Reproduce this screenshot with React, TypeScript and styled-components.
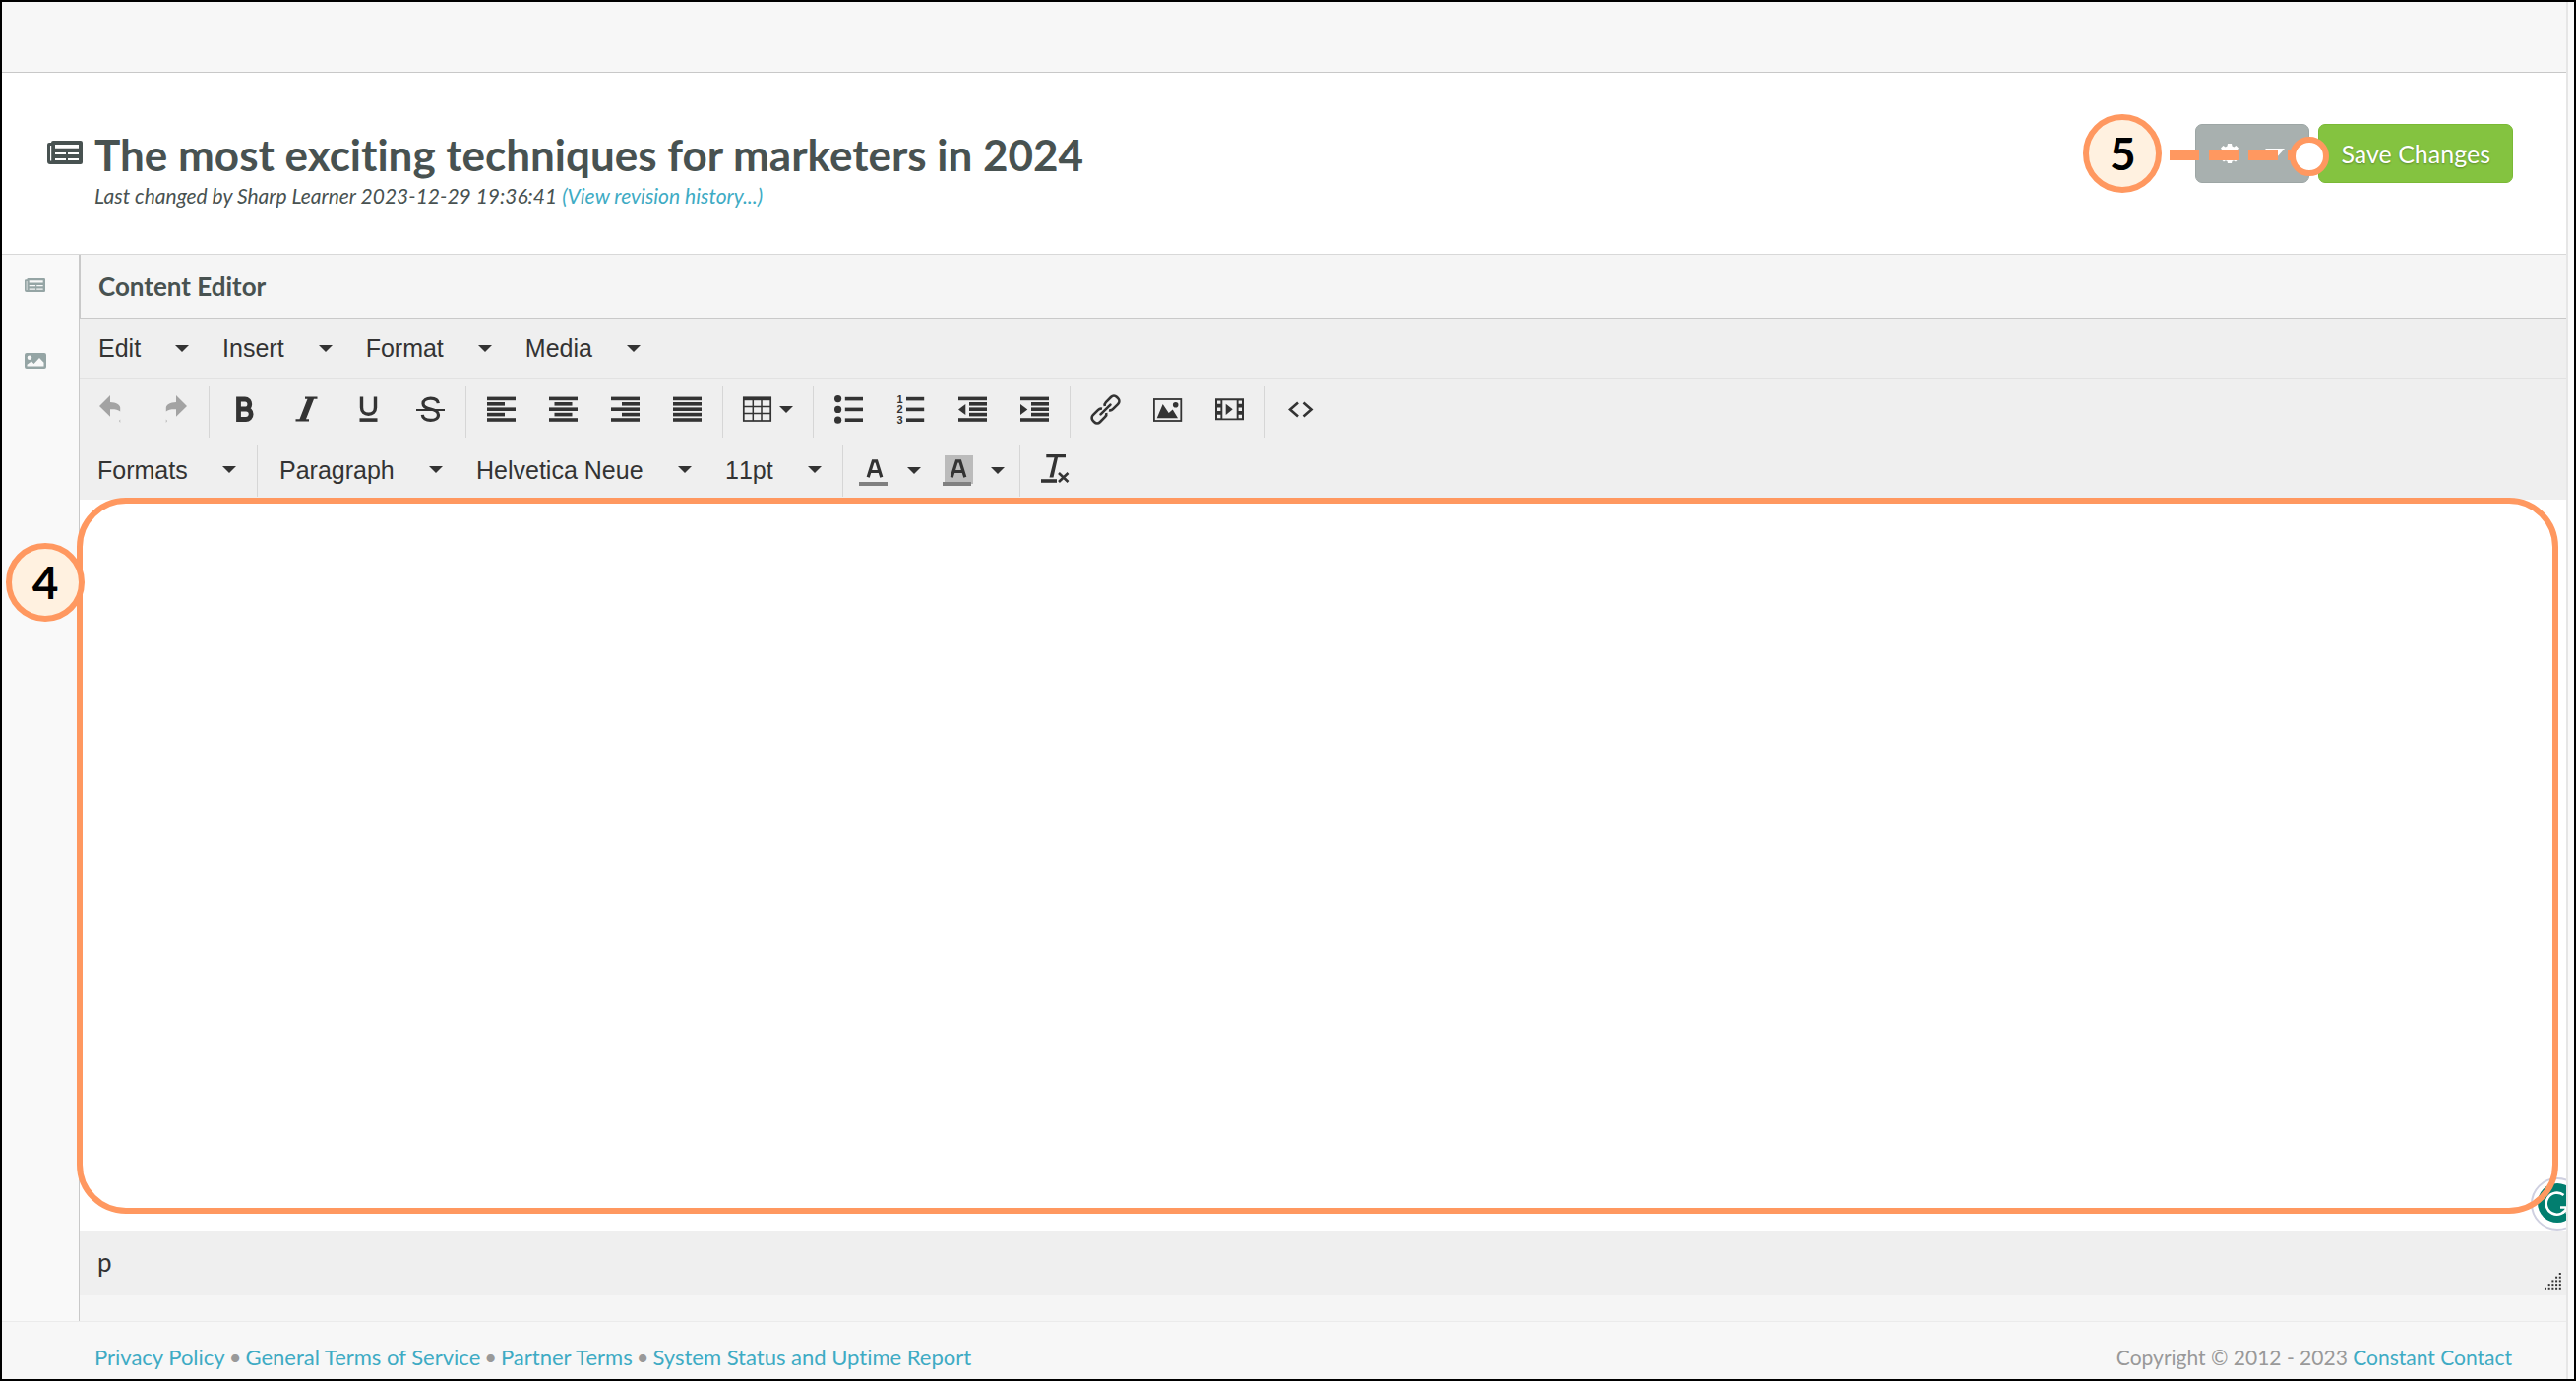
import React from "react";
import styled, { createGlobalStyle, css } from "styled-components";

const ORANGE = "#ff9860";
const INK = "#333333";
const HEADING = "#485251";
const LINK = "#3eabc4";

const GlobalStyle = createGlobalStyle`
  *, *::before, *::after { box-sizing: border-box; }
  body {
    margin: 0;
    background: #000;
    font-family: Lato, "Open Sans", sans-serif;
    font-size: 22px;
    line-height: 28px;
    font-variant-ligatures: none;
    color: ${HEADING};
  }
  h1, h2, p { margin: 0; }
  svg { display: block; flex: none; overflow: visible; }
  button, select, textarea { font: inherit; color: inherit; margin: 0; }
`;

const Page = styled.div`
  display: flex;
  min-height: 100vh;
  border: 2px solid #000;
`;

const Screen = styled.div`
  flex: 1;
  min-width: 0;
  display: flex;
  flex-direction: column;
  background: #f5f5f5;
`;

const ScrollTrack = styled.div`
  width: 8px;
  background: #fafafa;
  border-left: 2px solid #e6e6e6;
`;

const TopBar = styled.div`
  height: 72px;
  background: #f7f7f7;
  border-bottom: 1px solid #c8c8c8;
`;

const Header = styled.header`
  display: flex;
  justify-content: space-between;
  align-items: flex-start;
  padding: 52px 54px 45px 46px;
  background: #fff;
  border-bottom: 1px solid #d8d8d8;
`;

const TitleBlock = styled.div`
  display: flex;
  gap: 12px;
  padding-top: 5px;
`;

const TitleIcon = styled.div`
  padding-top: 12px;
`;

const Title = styled.h1`
  font-size: 44px;
  line-height: 52px;
  font-weight: 700;
`;

const Subtitle = styled.p`
  padding-top: 2px;
  font-size: 21px;
  font-style: italic;
`;

const Link = styled.a`
  color: ${LINK};
  text-decoration: none;
`;

const Actions = styled.div`
  position: relative;
  display: flex;
  gap: 9px;
`;

const ActionButton = styled.button<{ $tone: "grey" | "green" }>`
  display: flex;
  align-items: center;
  justify-content: center;
  height: 60px;
  border-radius: 7px;
  color: #fff;
  font-size: 25px;
  line-height: 32px;
  text-shadow: 0 1px 2px rgba(0, 0, 0, 0.3);
  ${(p) =>
    p.$tone === "green"
      ? css`
          padding: 0 22px;
          background: #84c340;
          border: 1px solid #7ab935;
        `
      : css`
          gap: 26px;
          padding: 0 24px;
          background: #a8b0af;
          border: 1px solid #9da6a5;
        `}
`;

const StepBadge = styled.span<{ $left: number; $top: number }>`
  position: absolute;
  left: ${(p) => p.$left}px;
  top: ${(p) => p.$top}px;
  z-index: 3;
  display: flex;
  align-items: center;
  justify-content: center;
  width: 80px;
  height: 80px;
  border: 6px solid ${ORANGE};
  border-radius: 50%;
  background: #fff1e0;
  color: #000;
  font-size: 46px;
  line-height: 52px;
  font-weight: 700;
`;

const Connector = styled.svg`
  position: absolute;
  left: -26px;
  top: 12px;
`;

const Workspace = styled.div`
  flex: 1;
  display: flex;
`;

const Sidebar = styled.nav`
  display: flex;
  flex-direction: column;
  gap: 62px;
  width: 79px;
  padding: 24px 0 0 23px;
  background: #f9f9f9;
  border-right: 1px solid #c9c9c9;
`;

const SideButton = styled.button`
  display: block;
  align-self: flex-start;
  padding: 0;
  border: 0;
  background: none;
`;

const Panel = styled.main`
  flex: 1;
  min-width: 0;
  display: flex;
  flex-direction: column;
  padding-bottom: 26px;
  color: ${INK};
`;

const PanelTitle = styled.h2`
  padding: 16px 18px;
  border-left: 1px solid #c9c9c9;
  border-bottom: 1px solid #c9c9c9;
  font-size: 26px;
  line-height: 32px;
  font-weight: 700;
  color: ${HEADING};
`;

const controlFont = css`
  font-family: "Liberation Sans", Arial, sans-serif;
  font-size: 25px;
  line-height: 28px;
  font-kerning: none;
`;

const MenuBar = styled.div`
  display: flex;
  height: 61px;
  background: #efefef;
  border-bottom: 1px solid #e2e2e2;
`;

const MenuButton = styled.button`
  ${controlFont}
  display: flex;
  align-items: center;
  gap: 35px;
  padding: 0 15px 0 19px;
  border: 0;
  background: none;
`;

const Toolbar = styled.div`
  display: flex;
  flex-direction: column;
  gap: 7px;
  padding: 7px 0 3px;
  background: #efefef;
`;

const ToolRow = styled.div`
  display: flex;
  height: 53px;
`;

const Group = styled.div`
  display: flex;
  padding: 0 4px;
  & + & {
    border-left: 1px solid #d6d6d6;
  }
  &:first-child {
    padding-left: 1px;
  }
`;

const SelectGroup = styled.div`
  display: flex;
  padding: 0 5px 0 4px;
  & + & {
    border-left: 1px solid #d6d6d6;
  }
  &:first-child {
    padding-left: 0;
  }
`;

const ToolButton = styled.button`
  display: flex;
  align-items: center;
  justify-content: center;
  gap: 8px;
  min-width: 63px;
  padding: 0 16px 4px;
  border: 0;
  background: none;
`;

const ColorButton = styled.button`
  display: flex;
  align-items: center;
  gap: 20px;
  padding: 0 10px 0 12px;
  border: 0;
  background: none;
`;

const Dropdown = styled.label`
  display: grid;
  align-items: center;
  padding: 0 16px 2px 0;
  & > * {
    grid-area: 1 / 1;
  }
  & > svg {
    justify-self: end;
    pointer-events: none;
  }
`;

const Select = styled.select`
  ${controlFont}
  appearance: none;
  height: 100%;
  padding: 0 49px 0 18px;
  border: 0;
  background: none;
`;

const Canvas = styled.div`
  position: relative;
  flex: 1;
  display: flex;
  min-height: 400px;
  background: #fff;
`;

const TextArea = styled.textarea`
  flex: 1;
  padding: 24px 60px;
  border: 0;
  outline: 0;
  resize: none;
  background: none;
`;

const Highlight = styled.div`
  position: absolute;
  inset: -2px 8px 17px -3px;
  border: 6px solid ${ORANGE};
  border-radius: 50px;
  pointer-events: none;
`;

const AssistantClip = styled.div`
  position: absolute;
  right: 0;
  bottom: 0;
  width: 36px;
  height: 54px;
  overflow: hidden;
`;

const StatusBar = styled.div`
  display: flex;
  justify-content: space-between;
  align-items: flex-end;
  height: 66px;
  padding: 0 5px 6px 18px;
  background: #efefef;
  font-size: 26px;
  line-height: 32px;
`;

const Path = styled.span`
  padding-bottom: 12px;
`;

const Footer = styled.footer`
  display: flex;
  justify-content: space-between;
  padding: 22px 55px 8px 94px;
  background: #f7f7f7;
  border-top: 1px solid #ebebeb;
  color: #999;
`;

const FooterLinks = styled.nav`
  display: flex;
  gap: 4px;
`;

const Copyright = styled.p`
  font-size: 21px;
`;

const Caret = ({ width = 14, height = 7 }: { width?: number; height?: number }) => (
  <svg width={width} height={height} viewBox="0 0 14 7" preserveAspectRatio="none" aria-hidden="true">
    <path d="M0 0h14L7 7z" fill="currentColor" />
  </svg>
);

const Newspaper = ({ width, height, color }: { width: number; height: number; color: string }) => (
  <svg width={width} height={height} viewBox="0 0 36 24" aria-hidden="true">
    <path
      fill={color}
      fillRule="evenodd"
      d="M6 0h28a2 2 0 0 1 2 2v20a2 2 0 0 1-2 2H3a3 3 0 0 1-3-3V4a2 2 0 0 1 2-2h2a2 2 0 0 1 2-2zM8 4v3.7h24V4zM8 12v2h11v-2zM21 12v2h11v-2zM8 18v2h11v-2zM21 18v2h11v-2zM3 5v15.500h1.200V5z"
    />
  </svg>
);

const Picture = () => (
  <svg width="22" height="16" viewBox="0 0 22 16" aria-hidden="true">
    <path
      fill="#95a5a5"
      fillRule="evenodd"
      d="M2 0h18a2 2 0 0 1 2 2v12a2 2 0 0 1-2 2H2a2 2 0 0 1-2-2V2a2 2 0 0 1 2-2zM5 2.500a2.300 2.300 0 1 0 0 4.600 2.300 2.300 0 0 0 0-4.600zM2.500 13.500h17V9.800L15 5l-5.500 6L7 8.500l-4.500 3.300z"
    />
  </svg>
);

const Icon = ({ children }: { children: React.ReactNode }) => (
  <svg width="29" height="29" viewBox="0 0 29 29" fill={INK} aria-hidden="true">
    {children}
  </svg>
);

const Bars = ({ rows }: { rows: [number, number][] }) => (
  <>
    {rows.map(([x, w], i) => (
      <rect key={i} x={x} y={1.6 + i * 5.4} width={w} height={3.6} />
    ))}
  </>
);

const undoShape = "M0 11L11 0v7c6 .3 10 2.500 10.200 5.500V16.500C19 14.300 15 14 11 14.200v7.500zM21.200 24.500v3.500l-1-2z";

const icons: Record<string, React.ReactNode> = {
  undo: <path d={undoShape} transform="translate(2 0)" fill="#a3a3a3" />,
  redo: <path d={undoShape} transform="translate(28 0) scale(-1 1)" fill="#a3a3a3" />,
  bold: (
    <path
      d="M8.500 4h6.500a4.800 5 0 0 1 0 10H8.500zM8.500 14h7.500a5.100 5.200 0 0 1 0 10.500H8.500z"
      fill="none"
      stroke={INK}
      strokeWidth="4.800"
    />
  ),
  italic: <path d="M13 1.500h12.500v2.200H22L14 24.300h3v2.200H3.500v-2.200h4L15.500 3.700H13z" />,
  underline: (
    <>
      <path d="M7.500 1.500v11c0 4.500 3 6.700 7 6.700s7-2.200 7-6.700v-11" fill="none" stroke={INK} strokeWidth="3.400" />
      <rect x="5.500" y="23.300" width="18" height="3.600" />
    </>
  ),
  strike: (
    <>
      <path
        d="M22.300 8.200C22 5 19 3.100 14.700 3.100S7 5 7 8.400c0 3.200 3 4.600 7.500 5.600s8 2.400 8 5.900-3.500 5.500-8 5.500-8-2-8.200-5.500"
        fill="none"
        stroke={INK}
        strokeWidth="3.200"
      />
      <rect y="14" width="29" height="2" />
    </>
  ),
  left: <Bars rows={[[0, 29], [0, 18], [0, 29], [0, 18], [0, 29]]} />,
  center: <Bars rows={[[0, 29], [5.5, 18], [0, 29], [5.5, 18], [0, 29]]} />,
  right: <Bars rows={[[0, 29], [11, 18], [0, 29], [11, 18], [0, 29]]} />,
  justify: <Bars rows={[[0, 29], [0, 29], [0, 29], [0, 29], [0, 29]]} />,
  table: (
    <>
      <rect x="0.800" y="2.500" width="27.400" height="23.500" fill="none" stroke={INK} strokeWidth="1.700" />
      <rect y="1.600" width="29" height="3.600" />
      <path d="M10.300 4v22M19 4v22M1 11.500h27M1 18.500h27" stroke={INK} strokeWidth="1.500" />
    </>
  ),
  bullets: (
    <>
      {[3.6, 14.4, 25.2].map((y) => (
        <React.Fragment key={y}>
          <circle cx="3.600" cy={y} r="3.600" />
          <rect x="10.800" y={y - 1.8} width="18.200" height="3.600" />
        </React.Fragment>
      ))}
    </>
  ),
  numbers: (
    <>
      {[3.6, 14.4, 25.2].map((y, i) => (
        <React.Fragment key={y}>
          <text x="0.500" y={y + 4} fontFamily="Liberation Sans, sans-serif" fontWeight="700" fontSize="11">
            {i + 1}
          </text>
          <rect x="10" y={y - 1.8} width="18.200" height="3.600" />
        </React.Fragment>
      ))}
    </>
  ),
  outdent: (
    <>
      <Bars rows={[[0, 29], [11, 18], [11, 18], [11, 18], [0, 29]]} />
      <path d="M0 14.500L7.300 9v11z" />
    </>
  ),
  indent: (
    <>
      <Bars rows={[[0, 29], [11, 18], [11, 18], [11, 18], [0, 29]]} />
      <path d="M7.300 14.500L0 9v11z" />
    </>
  ),
  link: (
    <g transform="rotate(-45 14.500 14.500)" fill="none" stroke={INK} strokeWidth="2.600">
      <path d="M12.500 11.500a4 4 0 0 0-3.500-2H1.500a4 4 0 0 0-4 4v2a4 4 0 0 0 4 4H9a4 4 0 0 0 3.500-2" />
      <path d="M16.500 11.500a4 4 0 0 1 3.500-2h7.500a4 4 0 0 1 4 4v2a4 4 0 0 1-4 4H20a4 4 0 0 1-3.500-2" />
      <path d="M7.500 14.500h14" strokeLinecap="round" />
    </g>
  ),
  image: (
    <>
      <rect x="0.900" y="4" width="27.400" height="22" fill="none" stroke={INK} strokeWidth="1.800" />
      <path d="M3.700 23.300L9.700 9l6 9 4-3.500 5.300 8.800z" />
      <circle cx="22.700" cy="9.700" r="2.800" />
    </>
  ),
  media: (
    <>
      <path
        fillRule="evenodd"
        d="M0 3.300h29v22H0zM7.300 5.200v18.200h14.400V5.200zM2 5.400v3.400h3.400V5.400zM2 12.600V16h3.400v-3.400zM2 19.800v3.400h3.400v-3.400zM23.600 5.400v3.400H27V5.400zM23.600 12.600V16H27v-3.400zM23.600 19.800v3.400H27v-3.400z"
      />
      <path d="M10.700 8.800l7 5.500-7 5.700z" />
    </>
  ),
  code: <path d="M12 7.500L4 14.500l8 7M17.500 7.500l8 7-8 7" fill="none" stroke={INK} strokeWidth="2.600" />,
  clear: (
    <>
      <path d="M5.300 0H25v3.200h-8L12.500 23.500H8.500L13.500 3.200H5.300z" />
      <rect y="25.200" width="16" height="3.600" />
      <path d="M18 19l9.500 9M27.500 19L18 28" fill="none" stroke={INK} strokeWidth="2.600" />
    </>
  ),
};

const ColorGlyph = ({ filled }: { filled?: boolean }) => (
  <svg width="29" height="31" viewBox="0 0 29 31" aria-hidden="true">
    {filled && <rect x="2" width="29" height="29" fill="#bbbbbb" />}
    <rect y="27" width="29" height="4" fill="#808080" />
    <path d="M9.200 22.300L14.300 5.800h3.400l5.100 16.500M11.500 16.500h9" fill="none" stroke={INK} strokeWidth="3.200" />
  </svg>
);

const toolGroups: { name: string; label: string; caret?: boolean }[][] = [
  [
    { name: "undo", label: "Undo" },
    { name: "redo", label: "Redo" },
  ],
  [
    { name: "bold", label: "Bold" },
    { name: "italic", label: "Italic" },
    { name: "underline", label: "Underline" },
    { name: "strike", label: "Strikethrough" },
  ],
  [
    { name: "left", label: "Align left" },
    { name: "center", label: "Align center" },
    { name: "right", label: "Align right" },
    { name: "justify", label: "Justify" },
  ],
  [{ name: "table", label: "Table", caret: true }],
  [
    { name: "bullets", label: "Bullet list" },
    { name: "numbers", label: "Numbered list" },
    { name: "outdent", label: "Decrease indent" },
    { name: "indent", label: "Increase indent" },
  ],
  [
    { name: "link", label: "Insert link" },
    { name: "image", label: "Insert image" },
    { name: "media", label: "Insert media" },
  ],
  [{ name: "code", label: "Source code" }],
];

const Picker = ({ label, value }: { label: string; value: string }) => (
  <Dropdown>
    <Select aria-label={label} defaultValue={value}>
      <option>{value}</option>
    </Select>
    <Caret />
  </Dropdown>
);

const ResizeGrip = () => (
  <svg width="17" height="17" viewBox="0 0 17 17" fill={INK} aria-hidden="true">
    {[0, 1, 2, 3, 4].flatMap((row) =>
      [0, 1, 2, 3, 4]
        .filter((col) => col >= 4 - row)
        .map((col) => <rect key={`${row}-${col}`} x={col * 3.7} y={row * 3.7} width="2" height="2" />)
    )}
  </svg>
);

const Assistant = () => (
  <AssistantClip>
    <svg width="54" height="54" viewBox="0 0 54 54" aria-hidden="true">
      <circle cx="27" cy="27" r="26" fill="#fff" stroke="#cfd0e0" strokeWidth="2" />
      <circle cx="27" cy="26" r="20" fill="#027e6f" />
      <path d="M33.500 18A11 11 0 1 0 37 30.500H30M37 30.500V37" fill="none" stroke="#fff" strokeWidth="2.600" />
    </svg>
  </AssistantClip>
);

const footerLinks = ["Privacy Policy", "General Terms of Service", "Partner Terms", "System Status and Uptime Report"];

export default function App() {
  return (
    <>
      <GlobalStyle />
      <Page>
        <Screen>
          <TopBar />
          <Header>
            <TitleBlock>
              <TitleIcon>
                <Newspaper width={36} height={24} color={HEADING} />
              </TitleIcon>
              <div>
                <Title>The most exciting techniques for marketers in 2024</Title>
                <Subtitle>
                  Last changed by Sharp Learner 2023-12-29 19:36:41 <Link href="#history">(View revision history...)</Link>
                </Subtitle>
              </div>
            </TitleBlock>
            <Actions>
              <ActionButton $tone="grey" aria-label="Settings">
                <svg width="20" height="20" viewBox="0 0 20 20" fill="#fff" aria-hidden="true">
                  <path d="M8 0h4l.5 2.600 1.800.8L16.500 2 19 4.500l-1.400 2.200.7 1.700L20 9v3l-2 .5-.7 1.700L18.500 16 16 18.500l-2-1.200-1.500.6L12 20H8l-.5-2.100-1.600-.6L4 18.500 1.500 16l1.200-1.800L2 12.500 0 12V9l1.800-.6.7-1.700L1 4.500 3.500 2l2.200 1.400 1.800-.8z" />
                </svg>
                <Caret width={20} height={11} />
              </ActionButton>
              <ActionButton $tone="green">Save Changes</ActionButton>
              <StepBadge $left={-114} $top={-10}>
                5
              </StepBadge>
              <Connector width="162" height="41" viewBox="0 0 162 41" aria-hidden="true">
                <path d="M0 20h140" stroke={ORANGE} strokeWidth="10" strokeDasharray="30 10" />
                <circle cx="142" cy="21" r="17" fill="#fff" stroke={ORANGE} strokeWidth="6" />
              </Connector>
            </Actions>
          </Header>
          <Workspace>
            <Sidebar aria-label="Sections">
              <SideButton aria-label="Content">
                <Newspaper width={21} height={14} color="#95a5a5" />
              </SideButton>
              <SideButton aria-label="Images">
                <Picture />
              </SideButton>
            </Sidebar>
            <Panel>
              <PanelTitle>Content Editor</PanelTitle>
              <MenuBar>
                {["Edit", "Insert", "Format", "Media"].map((item) => (
                  <MenuButton key={item} aria-haspopup="menu">
                    {item}
                    <Caret />
                  </MenuButton>
                ))}
              </MenuBar>
              <Toolbar>
                <ToolRow>
                  {toolGroups.map((group, i) => (
                    <Group key={i}>
                      {group.map((tool) => (
                        <ToolButton key={tool.name} aria-label={tool.label}>
                          <Icon>{icons[tool.name]}</Icon>
                          {tool.caret && <Caret />}
                        </ToolButton>
                      ))}
                    </Group>
                  ))}
                </ToolRow>
                <ToolRow>
                  <SelectGroup>
                    <Picker label="Formats" value="Formats" />
                  </SelectGroup>
                  <SelectGroup>
                    <Picker label="Block style" value="Paragraph" />
                    <Picker label="Font family" value="Helvetica Neue" />
                    <Picker label="Font size" value="11pt" />
                  </SelectGroup>
                  <SelectGroup>
                    <ColorButton aria-label="Text color">
                      <ColorGlyph />
                      <Caret />
                    </ColorButton>
                    <ColorButton aria-label="Background color">
                      <ColorGlyph filled />
                      <Caret />
                    </ColorButton>
                  </SelectGroup>
                  <SelectGroup>
                    <ToolButton aria-label="Clear formatting">
                      <Icon>{icons.clear}</Icon>
                    </ToolButton>
                  </SelectGroup>
                </ToolRow>
              </Toolbar>
              <Canvas>
                <TextArea aria-label="Content" />
                <Assistant />
                <Highlight />
                <StepBadge $left={-75} $top={44}>
                  4
                </StepBadge>
              </Canvas>
              <StatusBar>
                <Path>p</Path>
                <ResizeGrip />
              </StatusBar>
            </Panel>
          </Workspace>
          <Footer>
            <FooterLinks aria-label="Legal">
              {footerLinks.map((text, i) => (
                <React.Fragment key={text}>
                  {i > 0 && <span>•</span>}
                  <Link href="#terms">{text}</Link>
                </React.Fragment>
              ))}
            </FooterLinks>
            <Copyright>
              Copyright © 2012 - 2023 <Link href="#home">Constant Contact</Link>
            </Copyright>
          </Footer>
        </Screen>
        <ScrollTrack />
      </Page>
    </>
  );
}
